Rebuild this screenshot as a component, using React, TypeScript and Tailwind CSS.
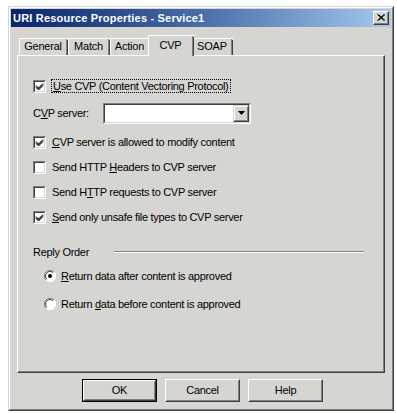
import React from "react";

const font = { fontFamily: '"Liberation Sans", Arial, sans-serif' };

function U({ children }: { children: React.ReactNode }) {
  return <span className="underline underline-offset-[1px]">{children}</span>;
}

function CheckBox({ checked }: { checked: boolean }) {
  return (
    <div className="w-[13px] h-[13px] shrink-0 border border-t-[#808080] border-l-[#808080] border-r-white border-b-white">
      <div className="w-full h-full bg-white border border-t-[#404040] border-l-[#404040] border-r-[#d6d5d2] border-b-[#d6d5d2] flex items-center justify-center">
        {checked && (
          <svg width="9" height="9" viewBox="0 0 9 9">
            <path d="M1 3.5 L3.5 6 L8 1.5 M1 4.5 L3.5 7 L8 2.5 M1 5.5 L3.5 8 L8 3.5" stroke="#000" strokeWidth="1" fill="none" />
          </svg>
        )}
      </div>
    </div>
  );
}

function Radio({ checked }: { checked: boolean }) {
  return (
    <svg width="12" height="12" viewBox="0 0 12 12" className="shrink-0">
      <circle cx="6" cy="6" r="5.5" fill="#fff" />
      <path d="M10 2 A5.5 5.5 0 0 0 2 10" stroke="#808080" strokeWidth="1" fill="none" />
      <path d="M9.2 2.8 A4.5 4.5 0 0 0 2.8 9.2" stroke="#404040" strokeWidth="1" fill="none" />
      <path d="M2 10 A5.5 5.5 0 0 0 10 2" stroke="#ffffff" strokeWidth="1" fill="none" />
      {checked && <circle cx="6" cy="6" r="2" fill="#000" />}
    </svg>
  );
}

function Button({ label, isDefault }: { label: string; isDefault?: boolean }) {
  const inner = (
    <div className="w-full h-full border border-t-white border-l-white border-r-[#404040] border-b-[#404040]">
      <div className="w-full h-full border border-t-[#d6d5d2] border-l-[#d6d5d2] border-r-[#808080] border-b-[#808080] flex items-center justify-center text-[11px] tracking-[-0.3px] text-black">
        {label}
      </div>
    </div>
  );
  return isDefault ? (
    <div className="w-[75px] h-[23px] border border-black">{inner}</div>
  ) : (
    <div className="w-[75px] h-[23px]">{inner}</div>
  );
}

function Tab({ label, w, selected }: { label: string; w: number; selected?: boolean }) {
  return (
    <div
      className={
        selected
          ? "relative z-10 -mx-[2px] h-[21px] -mb-[1px] bg-[#d6d5d2] border-l border-t border-white rounded-tl-[2px] flex"
          : "h-[17px] bg-[#d6d5d2] border-l border-t border-white rounded-tl-[2px] flex"
      }
      style={{ width: w }}
    >
      <div className="flex-1 border-r border-[#808080] flex items-center justify-center text-[11px] tracking-[-0.2px] pb-[1px]">
        {label}
      </div>
      <div className="w-[1px] bg-[#404040] mt-[1px]" />
    </div>
  );
}

export default function App() {
  return (
    <div className="w-[397px] h-[413px] bg-white pt-[6px] pl-[8px]" style={font}>
      <div className="w-[386px] h-[405px] border border-t-[#d6d5d2] border-l-[#d6d5d2] border-r-[#404040] border-b-[#404040]">
        <div className="w-full h-full border border-t-white border-l-white border-r-[#808080] border-b-[#808080] bg-[#d6d5d2] p-[1px] flex flex-col">
          {/* Title bar */}
          <div className="h-[18px] shrink-0 flex items-center justify-between bg-gradient-to-r from-[#0a246a] via-[#4a6ea8] to-[#a6caf0] pl-[2px] pr-[2px]">
            <span className="text-white font-bold text-[11px] tracking-[0.2px]">URI Resource Properties - Service1</span>
            <div className="w-[16px] h-[14px] border border-t-white border-l-white border-r-[#404040] border-b-[#404040] bg-[#d6d5d2]">
              <div className="w-full h-full border-r border-b border-[#808080] flex items-center justify-center">
                <svg width="8" height="7" viewBox="0 0 8 7">
                  <path d="M0.5 0.5 L7 6.5 M1.5 0.5 L8 6.5 M7 0.5 L0.5 6.5 M8 0.5 L1.5 6.5" stroke="#000" strokeWidth="1" fill="none" />
                </svg>
              </div>
            </div>
          </div>

          {/* Tabs */}
          <div className="h-[28px] shrink-0 flex items-end pl-[8px]">
            <Tab label="General" w={49} />
            <Tab label="Match" w={42} />
            <Tab label="Action" w={40} />
            <Tab label="CVP" w={46} selected />
            <Tab label="SOAP" w={41} />
          </div>

          {/* Panel */}
          <div className="ml-[6px] w-[368px] h-[318px] shrink-0 border-l border-t border-white border-r border-b border-r-[#404040] border-b-[#404040]">
            <div className="w-full h-full border-r border-b border-[#808080] flex flex-col pl-[15px] text-[11px] tracking-[-0.3px] text-black">
              <div className="mt-[20px] h-[20px] flex items-center">
                <CheckBox checked />
                <span className="ml-[5px] px-[1px] leading-[12px] border border-dotted border-black">
                  <U>U</U>se CVP (Content Vectoring Protocol)
                </span>
              </div>
              <div className="mt-[6px] h-[22px] flex items-center">
                <span className="w-[70px]">
                  C<U>V</U>P server:
                </span>
                <div className="w-[148px] h-[21px] border border-t-[#808080] border-l-[#808080] border-r-white border-b-white">
                  <div className="w-full h-full bg-white border border-t-[#404040] border-l-[#404040] border-r-[#d6d5d2] border-b-[#d6d5d2] flex justify-end">
                    <div className="w-[16px] h-full bg-[#d6d5d2] border border-t-[#d6d5d2] border-l-[#d6d5d2] border-r-[#404040] border-b-[#404040]">
                      <div className="w-full h-full border border-t-white border-l-white border-r-[#808080] border-b-[#808080] flex items-center justify-center">
                        <svg width="7" height="4" viewBox="0 0 7 4">
                          <path d="M0 0 H7 L3.5 4 Z" fill="#000" />
                        </svg>
                      </div>
                    </div>
                  </div>
                </div>
              </div>
              <div className="mt-[8px] h-[20px] flex items-center">
                <CheckBox checked />
                <span className="ml-[6px]">
                  <U>C</U>VP server is allowed to modify content
                </span>
              </div>
              <div className="mt-[5px] h-[20px] flex items-center">
                <CheckBox checked={false} />
                <span className="ml-[6px]">
                  Send HTTP <U>H</U>eaders to CVP server
                </span>
              </div>
              <div className="mt-[5px] h-[20px] flex items-center">
                <CheckBox checked={false} />
                <span className="ml-[6px]">
                  Send H<U>T</U>TP requests to CVP server
                </span>
              </div>
              <div className="mt-[5px] h-[20px] flex items-center">
                <CheckBox checked />
                <span className="ml-[6px]">
                  <U>S</U>end only unsafe file types to CVP server
                </span>
              </div>
              <div className="mt-[15px] h-[20px] flex items-center">
                <span>Reply Order</span>
                <div className="ml-[25px] w-[250px] flex flex-col">
                  <div className="h-[1px] bg-[#808080]" />
                  <div className="h-[1px] bg-white" />
                </div>
              </div>
              <div className="mt-[4px] h-[20px] flex items-center pl-[11px]">
                <Radio checked />
                <span className="ml-[5px]">
                  <U>R</U>eturn data after content is approved
                </span>
              </div>
              <div className="mt-[8px] h-[20px] flex items-center pl-[11px]">
                <Radio checked={false} />
                <span className="ml-[5px]">
                  Return <U>d</U>ata before content is approved
                </span>
              </div>
            </div>
          </div>

          {/* Buttons */}
          <div className="mt-[6px] ml-[71px] flex gap-[8px]">
            <Button label="OK" isDefault />
            <Button label="Cancel" />
            <Button label="Help" />
          </div>
        </div>
      </div>
    </div>
  );
}
